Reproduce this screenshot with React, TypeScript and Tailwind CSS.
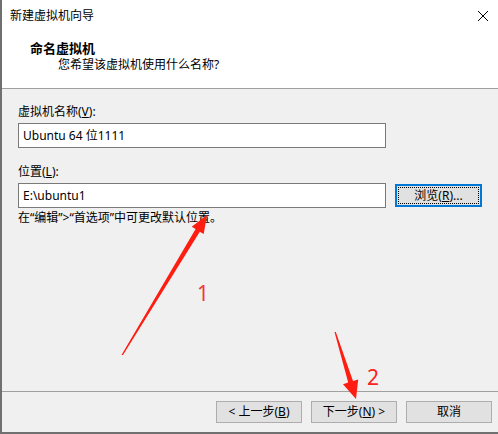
import React from "react";

const font = { fontFamily: '"Noto Sans", "Noto Sans CJK SC", sans-serif' };

function Btn({ children }: { children: React.ReactNode }) {
  return (
    <div className="w-[86px] h-[22px] bg-[#e1e1e1] border border-[#adadad] flex items-center justify-center text-[12px] leading-none text-black">
      {children}
    </div>
  );
}

export default function App() {
  return (
    <div
      className="relative w-[498px] h-[434px] bg-[#f0f0f0] border-l-2 border-b-2 border-[#707070] flex flex-col overflow-hidden text-black"
      style={font}
    >
      {/* header */}
      <div className="h-[88px] bg-white flex flex-col shrink-0">
        <div className="flex items-center justify-between h-[32px] pl-[8px] pr-[8px]">
          <span className="text-[12px] leading-[16px]">新建虚拟机向导</span>
          <svg width="12" height="12" viewBox="0 0 12 12" className="mr-[1px]">
            <path d="M1 1 L11 11 M11 1 L1 11" stroke="#000" strokeWidth="1" />
          </svg>
        </div>
        <div className="pl-[28px] mt-[8px] text-[13px] leading-[16px] font-bold">命名虚拟机</div>
        <div className="pl-[56px] mt-[1px] text-[12px] leading-[16px]">您希望该虚拟机使用什么名称?</div>
      </div>
      <div className="h-px bg-[#a0a0a0] shrink-0" />

      {/* body */}
      <div className="flex-1 flex flex-col pl-[16px]">
        <div className="mt-[15px] text-[12px] leading-[16px]">
          虚拟机名称(<u>V</u>):
        </div>
        <div className="mt-[3px] w-[368px] h-[25px] bg-white border border-[#7a7a7a] flex items-center pl-[4px] text-[12px]">
          Ubuntu 64 位1111
        </div>
        <div className="mt-[16px] text-[12px] leading-[16px]">
          位置(<u>L</u>):
        </div>
        <div className="mt-[3px] flex items-center">
          <div className="w-[368px] h-[25px] bg-white border border-[#7a7a7a] flex items-center pl-[4px] text-[12px]">
            E:\ubuntu1
          </div>
          <div className="ml-[9px] w-[87px] h-[23px] border-2 border-[#0078d7] bg-[#e1e1e1] p-[1px]">
            <div className="w-full h-full border border-dotted border-black flex items-center justify-center text-[12px] leading-none">
              浏览(<u>R</u>)...
            </div>
          </div>
        </div>
        <div className="mt-[2px] text-[12px] leading-[16px]">
          在“编辑”&gt;“首选项”中可更改默认位置。
        </div>
      </div>

      {/* footer */}
      <div className="h-px bg-[#a0a0a0] shrink-0" />
      <div className="h-[40px] shrink-0 flex items-start justify-end pt-[9px] pr-[6px] gap-[9px]">
        <Btn>&lt; 上一步(<u>B</u>)</Btn>
        <Btn>下一步(<u>N</u>) &gt;</Btn>
        <Btn>取消</Btn>
      </div>

      {/* annotations */}
      <svg className="absolute left-[-2px] top-0 pointer-events-none" width="498" height="434" viewBox="0 0 498 434">
        <polygon
          points="121.5,355 123,355 199.8,231.7 203.7,234 207,215 191.7,226.8 195.6,229.1"
          fill="#ff1d12"
        />
        <polygon
          points="334.5,332 335.8,332 353,381.1 358.2,379.4 356,399 343,384.2 348.2,382.5"
          fill="#ff1d12"
        />
        <text x="197" y="301" fontSize="21" fill="#f23a35" fontFamily="Noto Sans, sans-serif">1</text>
        <text x="367" y="385" fontSize="21" fill="#ff2020" fontFamily="Noto Sans, sans-serif">2</text>
      </svg>
    </div>
  );
}
